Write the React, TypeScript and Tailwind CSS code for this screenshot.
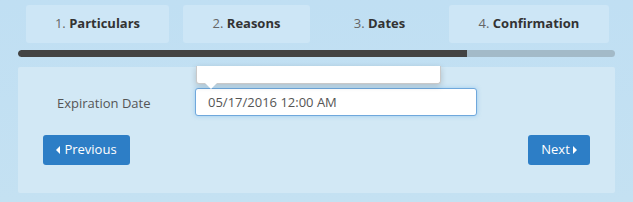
import React from 'react';

const steps = [
    { n: '1.', label: 'Particulars', w: 'w-[143px]', active: false },
    { n: '2.', label: 'Reasons', w: 'w-[127px]', active: false },
    { n: '3.', label: 'Dates', w: 'w-[111px]', active: true },
    { n: '4.', label: 'Confirmation', w: 'w-[160px]', active: false },
];

function CaretLeft() {
    return (
        <svg width="4" height="8" viewBox="0 0 4 8" className="fill-white">
            <path d="M4 0 L0 4 L4 8 Z" />
        </svg>
    );
}

function CaretRight() {
    return (
        <svg width="4" height="8" viewBox="0 0 4 8" className="fill-white">
            <path d="M0 0 L4 4 L0 8 Z" />
        </svg>
    );
}

export default function App() {
    return (
        <div
            className="w-[633px] h-[202px] bg-gradient-to-b from-[#c0dff3] to-[#c4e1f2] px-[18px] pt-[5px] overflow-hidden"
            style={{ fontFamily: '"Open Sans", "Liberation Sans", sans-serif' }}
        >
            {/* étapes */}
            <div className="flex gap-[14px] pl-[8px]">
                {steps.map((s) => (
                    <div
                        key={s.label}
                        className={`${s.w} h-[38px] rounded-[3px] flex items-center justify-center text-[13px] ${
                            s.active ? '' : 'bg-[#cde6f6]'
                        }`}
                    >
                        <span className="text-[#666]">{s.n}&nbsp;</span>
                        <span className="font-bold text-[#333]">{s.label}</span>
                    </div>
                ))}
            </div>

            {/* barre de progression */}
            <div className="mt-[7px] h-[7px] rounded-full bg-[#a3bac8] overflow-hidden">
                <div className="h-full w-[449px] bg-[#434343] rounded-l-full" />
            </div>

            {/* panneau */}
            <div className="mt-[10px] h-[126px] bg-[#d2e8f5] rounded-[2px] relative">
                <div className="flex items-center pt-[21px]">
                    <label className="w-[177px] pl-[39px] pt-[3px] text-[13px] text-[#555]">Expiration Date</label>
                    <div className="relative">
                        <div className="absolute left-[1px] -top-[22px] w-[245px] h-[18px] bg-white border border-[#c9c9c9] border-t-0 rounded-b-[3px] shadow-[0_2px_6px_rgba(0,0,0,0.18)]">
                            <div className="absolute left-[8px] -bottom-[6px] w-0 h-0 border-l-[6px] border-r-[6px] border-t-[6px] border-l-transparent border-r-transparent border-t-white" />
                        </div>
                        <input
                            readOnly
                            value="05/17/2016 12:00 AM"
                            className="w-[282px] h-[28px] px-[12px] bg-white border border-[#6fa8dc] rounded-[3px] text-[13px] text-[#555] outline-none shadow-[0_0_4px_rgba(102,175,233,0.5)]"
                        />
                    </div>
                </div>

                <div className="flex justify-between pl-[25px] pr-[25px] mt-[19px]">
                    <button className="w-[87px] h-[30px] bg-[#2d7ec6] rounded-[3px] text-white text-[13px] flex items-center justify-center gap-[4px]">
                        <CaretLeft />
                        Previous
                    </button>
                    <button className="w-[62px] h-[30px] bg-[#2d7ec6] rounded-[3px] text-white text-[13px] flex items-center justify-center gap-[3px]">
                        Next
                        <CaretRight />
                    </button>
                </div>
            </div>
        </div>
    );
}
